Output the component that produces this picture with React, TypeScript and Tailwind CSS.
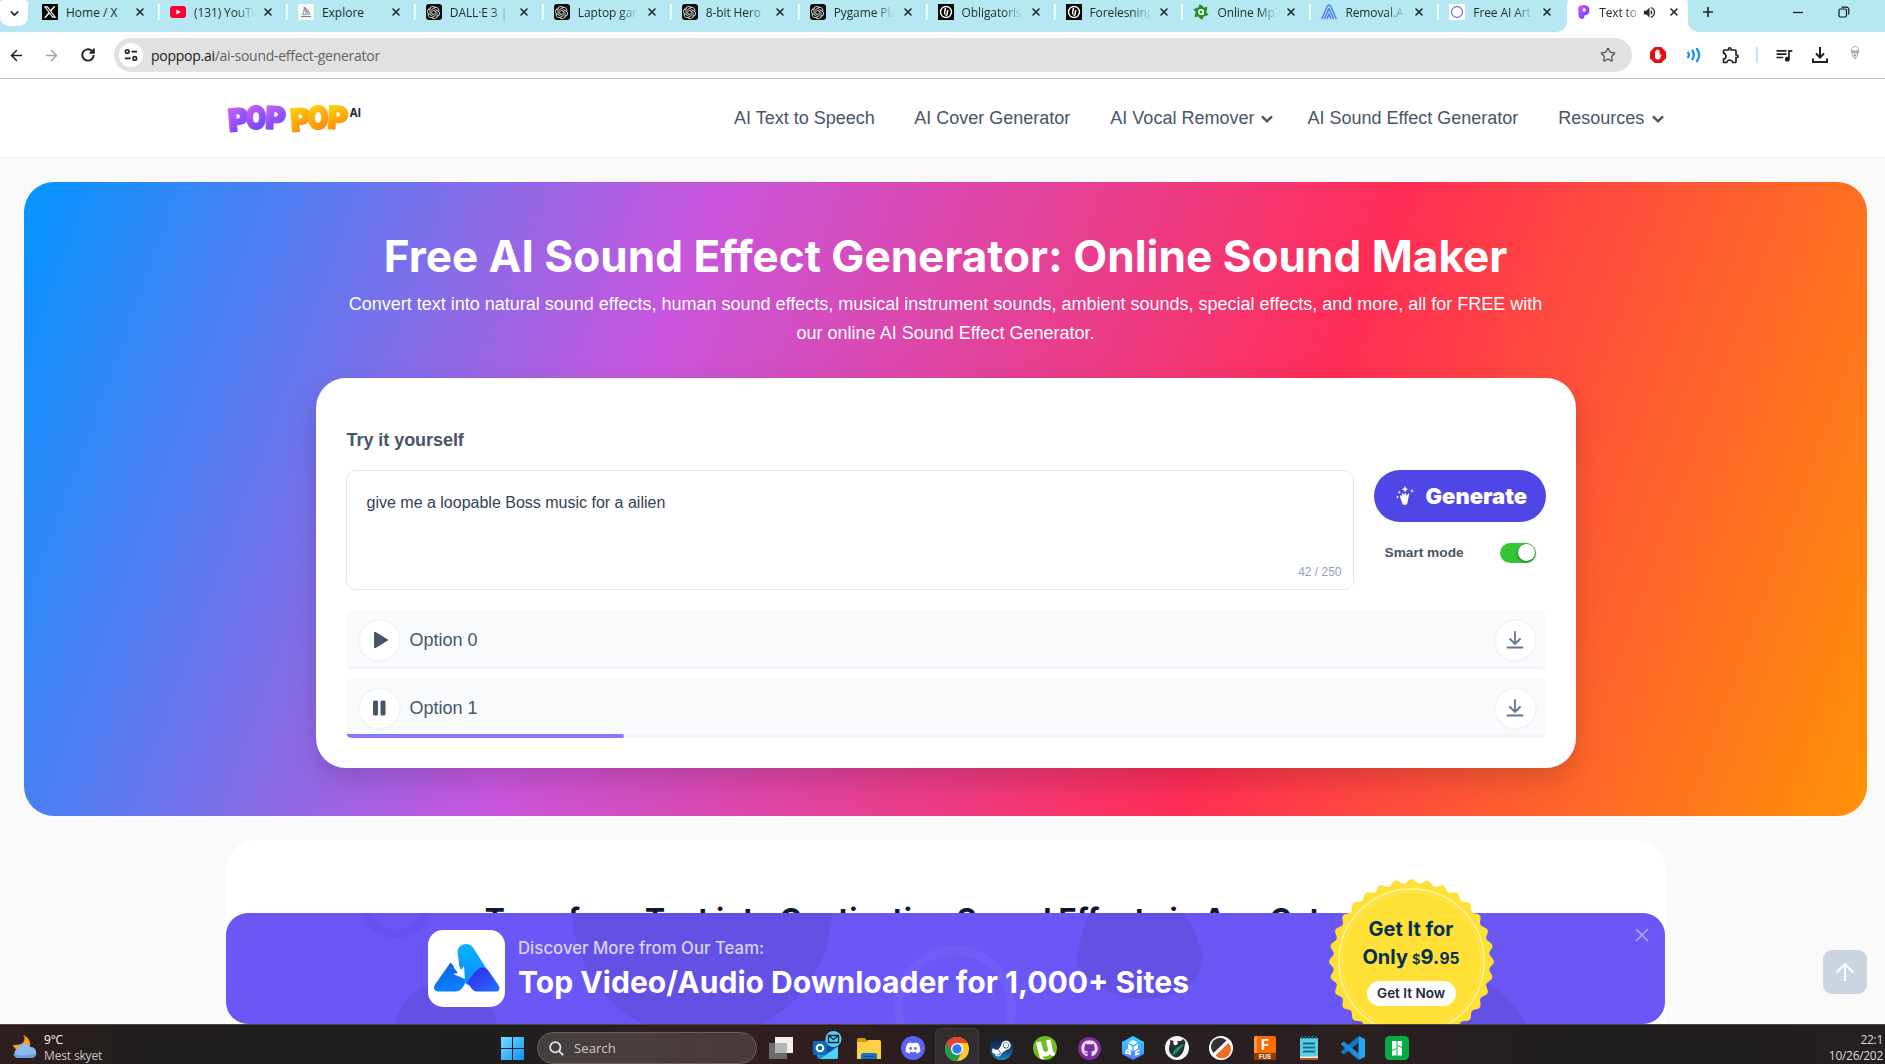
import React from 'react';
import { FaDiscord, FaGithub, FaSteamSymbol, FaXTwitter } from 'react-icons/fa6';
import { MdQueueMusic, MdOutlineExtension, MdVolumeUp } from 'react-icons/md';
import { SiOpenai } from 'react-icons/si';
import { ArrowLeft, ArrowRight, ChevronDown, Star, X } from 'lucide-react';

const chromeFont = "font-['Open_Sans','Noto_Sans',sans-serif]";

/* ---------- tab favicons ---------- */

const XFav = () => (
  <span className="flex size-4 items-center justify-center bg-black text-white"><FaXTwitter size={14} /></span>
);
const YouTubeFav = () => (
  <svg viewBox="0 0 16 16" className="size-4"><rect y="2" width="16" height="12" rx="3" fill="#ff0033" /><path d="M6.4 5.4 10.8 8l-4.4 2.6z" fill="#fff" /></svg>
);
const ExploreFav = () => (
  <svg viewBox="0 0 16 16" className="size-4">
    <rect width="16" height="16" fill="#f8f8fa" />
    <path d="M3 12.5h10M4 10.6C6 8.5 6.500 6 6 3.200c3 1.500 5 4.300 5.800 7.400M5 10.800l3.300-.2M8.200 10.600c0-2.500-.5-5-1.700-6.800M10 10.600C9.800 8 8.500 5.500 7 4" stroke="#7d8289" strokeWidth="1" fill="none" />
  </svg>
);
const GptFav = () => (
  <span className="flex size-4 items-center justify-center rounded-[3px] bg-[#0d0d0d] text-[#e8e8e8]"><SiOpenai size={13} /></span>
);
const SchoolFav = () => (
  <svg viewBox="0 0 16 16" className="size-4">
    <rect width="16" height="16" fill="#000" />
    <circle cx="8" cy="8" r="5.500" fill="none" stroke="#fff" strokeWidth="1.400" />
    <path d="M7.500 4 6.600 8.300c-.2 1.200.2 1.700 1 1.700M9.900 5.800 9 10.300c-.2.900-.8 1.200-1.400.900" stroke="#fff" strokeWidth="1.500" fill="none" />
  </svg>
);
const ConvertFav = () => (
  <svg viewBox="0 0 16 16" className="size-4">
    <g fill="#259021">
      {[0, 60, 120, 180, 240, 300].map((a) => (
        <path key={a} d="M5 5 6.600 0l3.600 2.600L10.500 6z" transform={`rotate(${a} 8 8)`} />
      ))}
      <circle cx="8" cy="8" r="5" />
    </g>
    <circle cx="8" cy="8" r="2.200" fill="none" stroke="#fff" strokeWidth="1.500" />
    <path d="M10 6v5" stroke="#fff" strokeWidth="1.300" />
  </svg>
);
const RemovalFav = () => (
  <svg viewBox="0 0 16 16" className="size-4">
    <path d="M1 14.500 6.300 2.300Q8 .2 9.700 2.300L15 14.500M3.600 14.500 8 4.500l4.400 10M6.200 14.500 8 10l1.800 4.500" fill="none" stroke="#4c7cf8" strokeWidth="1.500" strokeLinecap="round" strokeLinejoin="round" />
  </svg>
);
const RingFav = () => (
  <svg viewBox="0 0 16 16" className="size-4">
    <defs><linearGradient id="ring" x2="1" y2="1"><stop stopColor="#5b8be0" /><stop offset="1" stopColor="#a855c8" /></linearGradient></defs>
    <rect width="16" height="16" fill="#fff" />
    <circle cx="8" cy="8" r="5.500" fill="none" stroke="url(#ring)" strokeWidth="1.300" />
  </svg>
);
const PopFav = () => (
  <svg viewBox="0 0 16 16" className="size-4">
    <defs><linearGradient id="popfav" x2="1" y2="1"><stop stopColor="#d65cf5" /><stop offset="1" stopColor="#5a3bff" /></linearGradient></defs>
    <path d="M2.200 4C2.500 1.800 5 .8 8 1c3.800.2 5.600 2.200 5.500 5.200-.1 3.200-2 5-5 5.400-.3 1.800-.6 3.300-1.900 3.300C3.500 15 2.200 13 2.400 9.500Z" fill="url(#popfav)" />
    <circle cx="8.200" cy="6" r="1.700" fill="#fff" />
  </svg>
);

const tabs: { title: string; icon: () => React.JSX.Element; full?: boolean }[] = [
  { title: 'Home / X', icon: XFav, full: true },
  { title: '(131) YouTu', icon: YouTubeFav },
  { title: 'Explore', icon: ExploreFav, full: true },
  { title: 'DALL·E 3 | C', icon: GptFav },
  { title: 'Laptop gar', icon: GptFav },
  { title: '8-bit Hero', icon: GptFav },
  { title: 'Pygame Pla', icon: GptFav },
  { title: 'Obligatoris', icon: SchoolFav },
  { title: 'Forelesning', icon: SchoolFav },
  { title: 'Online Mp3', icon: ConvertFav },
  { title: 'Removal.A', icon: RemovalFav },
  { title: 'Free AI Art', icon: RingFav },
];

function TabStrip() {
  return (
    <div className={`flex h-8 shrink-0 bg-[#b6e8f3] text-[12px] text-[#1f2a2d] ${chromeFont}`}>
      <div className="mr-1 flex h-[26px] w-7 shrink-0 items-center justify-center rounded-b-[9px] rounded-t-[4px] bg-white">
        <ChevronDown size={13} strokeWidth={3.200} />
      </div>
      {tabs.map((t, i) => (
        <div key={t.title} className="flex h-6 w-[127.950px] shrink-0 items-center pl-[10px]">
          <t.icon />
          <span className={t.full ? 'ml-2 mt-px w-[61px] whitespace-nowrap' : 'ml-2 mt-px w-[61px] overflow-hidden whitespace-nowrap tracking-[-0.100px] [mask-image:linear-gradient(to_right,#000_68%,transparent_100%)]'}>
            {t.title}
          </span>
          <X size={12} strokeWidth={3.200} className="ml-[7px]" />
          <span className={i < 11 ? 'ml-auto h-4 w-[2px] bg-white' : 'hidden'} />
        </div>
      ))}
      <div className="relative -mt-[5px] h-[37px] w-[121px] shrink-0 rounded-t-[10px] bg-white">
        <svg viewBox="0 0 10 10" className="absolute -left-[10px] bottom-0 size-[10px]"><path d="M10 0v10H0A10 10 0 0 0 10 0" fill="#fff" /></svg>
        <svg viewBox="0 0 10 10" className="absolute -right-[10px] bottom-0 size-[10px]"><path d="M0 0v10h10A10 10 0 0 1 0 0" fill="#fff" /></svg>
        <div className="flex h-[34px] items-center pl-[9px]">
          <PopFav />
          <span className="ml-[7px] mt-px w-[38px] overflow-hidden whitespace-nowrap tracking-[-0.150px] [mask-image:linear-gradient(to_right,#000_70%,transparent_115%)]">Text to</span>
          <MdVolumeUp size={15} className="ml-[5px]" />
          <X size={12} strokeWidth={3.200} className="ml-[11px]" />
        </div>
      </div>
      <svg viewBox="0 0 12 12" className="ml-[14px] mt-[6px] size-3"><path d="M6 1v10M1 6h10" stroke="#1f2a2d" strokeWidth="1.700" /></svg>
      <svg viewBox="0 0 12 12" className="ml-[78px] mt-[6px] size-3"><path d="M1 6.500h10" stroke="#111" strokeWidth="1.200" /></svg>
      <svg viewBox="0 0 12 12" className="ml-[34px] mt-[6px] size-3" fill="none" stroke="#111" strokeWidth="1.200"><rect x="1" y="3" width="7.500" height="8" rx="1.500" /><path d="M3.500 1.200h5a2.300 2.300 0 0 1 2.300 2.300V8.500" /></svg>
    </div>
  );
}

function Toolbar() {
  return (
    <div className={`flex h-[47px] shrink-0 items-center border-b border-[#c6c8ca] bg-white text-[#1f1f1f] ${chromeFont}`}>
      <ArrowLeft size={17} strokeWidth={2.200} className="ml-[8px]" />
      <ArrowRight size={17} strokeWidth={2.200} className="ml-[18px] text-[#a3a3a3]" />
      <svg viewBox="0 0 16 16" className="ml-[20px] size-4" fill="none" stroke="currentColor" strokeWidth="1.900"><path d="M13.700 8A5.700 5.700 0 1 1 11.800 3.700L13.500 5.300M13.800 1.500v4.200H9.600" /></svg>
      <div className="ml-[18px] flex h-[34px] w-[1518px] items-center rounded-full bg-[#e1e1e1] pl-[5px]">
        <span className="flex size-6 items-center justify-center rounded-full bg-white">
          <svg viewBox="0 0 14 14" className="size-[14px]" fill="none" stroke="#1f1f1f" strokeWidth="1.600">
            <circle cx="3.200" cy="3.600" r="1.800" /><path d="M7.500 3.600H13M1 10.400h5.500" /><circle cx="10.800" cy="10.400" r="1.800" />
          </svg>
        </span>
        <span className="ml-[8px] whitespace-nowrap text-[14px] tracking-[-0.270px] text-[#5f6368]"><span className="text-[#1a1a1a]">poppop.ai</span>/ai-sound-effect-generator</span>
        <Star size={16} strokeWidth={2} className="ml-auto mr-[16px] text-[#5a5a5a]" />
      </div>
      <svg viewBox="0 0 16 16" className="ml-[18px] size-4">
        <path d="M4.700 0h6.600L16 4.700v6.600L11.300 16H4.700L0 11.300V4.700z" fill="#e60d12" />
        <path d="M5 8V4.600c0-.8 1-.8 1 0V3.500c0-.9 1.200-.9 1.200 0v-.4c0-.9 1.300-.9 1.300 0v.7c0-.8 1.200-.8 1.200 0V8.500l.9-1c.6-.5 1.300 0 .9.6L10 11.800c-.8 1.200-4 1.200-4.600-.3C5 10.500 5 9.500 5 8" fill="#fff" />
      </svg>
      <svg viewBox="0 0 16 16" className="ml-[20px] size-4" fill="none" stroke="#1790f0" strokeWidth="2.300" strokeLinecap="round">
        <path d="M2.200 5.800q1.400 2.200 0 4.400M6.500 3.800q2.600 4.200 0 8.400M11 2q4.200 6 0 12" />
      </svg>
      <MdOutlineExtension size={20} className="ml-[19px]" />
      <span className="ml-[15px] h-4 w-[2px] bg-[#b6e8f3]" />
      <MdQueueMusic size={20} className="ml-[16px]" />
      <svg viewBox="0 0 16 16" className="ml-[18px] size-4" fill="none" stroke="#1f1f1f" strokeWidth="2"><path d="M8 0v10M4 6.500l4 4 4-4M1 11.500V15h14v-3.500" /></svg>
      <svg viewBox="0 0 14 18" className="-mt-[4px] ml-[21px] h-[16px] w-[12px]" fill="none" stroke="#9b9b9b" strokeWidth=".9">
        <path d="M3 8C2 4 3.500 1.500 7 1.500S12 4 11 8c-.3 3-2 7-4 8-2-1-3.700-5-4-8Z" /><path d="M3.500 6.500h2.800v2H4zM7.700 6.500h2.800v2H8.200zM5.500 12h3M7 13v2M5 10.500l2-.6 2 .6" stroke="#777" />
      </svg>
    </div>
  );
}

/* ---------- site header ---------- */

function Logo() {
  return (
    <svg viewBox="0 0 136 34" className="mb-[3px] h-[34px] w-[136px]" fontFamily="Inter, sans-serif" fontWeight="900">
      <defs>
        <linearGradient id="lp" x1="0" y1="0" x2="0.400" y2="1"><stop offset=".1" stopColor="#d765f6" /><stop offset=".9" stopColor="#7546fd" /></linearGradient>
        <linearGradient id="ly" x1="0" y1="0" x2="0.300" y2="1"><stop offset=".15" stopColor="#ffd60f" /><stop offset=".9" stopColor="#fb8c0c" /></linearGradient>
      </defs>
      <g fontSize="31" strokeWidth="1.800" strokeLinejoin="round">
        <g fill="url(#lp)" stroke="url(#lp)">
          <text x="2" y="31" textLength="20" lengthAdjust="spacingAndGlyphs" transform="rotate(-5 12 18)">P</text>
          <text x="20" y="29" textLength="20" lengthAdjust="spacingAndGlyphs">O</text>
          <text x="39.500" y="29" textLength="20" lengthAdjust="spacingAndGlyphs" transform="rotate(3 49 18)">P</text>
        </g>
        <g fill="url(#ly)" stroke="url(#ly)">
          <text x="64.500" y="31" textLength="20" lengthAdjust="spacingAndGlyphs" transform="rotate(-5 74 18)">P</text>
          <text x="82" y="29" textLength="20.500" lengthAdjust="spacingAndGlyphs">O</text>
          <text x="102" y="29" textLength="20" lengthAdjust="spacingAndGlyphs" transform="rotate(4 112 18)">P</text>
        </g>
      </g>
      <text x="123.500" y="16.500" fontSize="12" fontWeight="700" fill="#1e293b" textLength="11.500" lengthAdjust="spacingAndGlyphs">AI</text>
    </svg>
  );
}

const NavChevron = () => (
  <svg viewBox="0 0 12 12" className="mt-px size-3" fill="none" stroke="currentColor" strokeWidth="2.400"><path d="m1 3.300 5 5 5-5" /></svg>
);

function SiteHeader() {
  return (
    <header className="flex h-[79px] items-center whitespace-nowrap border-b border-[#f3f3f3] bg-white pl-[226px] text-[18px] text-[#475569]">
      <Logo />
      <nav className="ml-[372px] flex items-center pt-px">
        <a className="mr-[39.500px]">AI Text to Speech</a>
        <a className="mr-[40px]">AI Cover Generator</a>
        <a className="mr-[34px] flex items-center gap-[7px]">AI Vocal Remover<NavChevron /></a>
        <a className="mr-[40px]">AI Sound Effect Generator</a>
        <a className="flex items-center gap-[8px]">Resources<NavChevron /></a>
      </nav>
    </header>
  );
}

/* ---------- generator ---------- */

function RoundButton({ children }: { children: React.ReactNode }) {
  return <button className="flex size-[43px] items-center justify-center rounded-full border-2 border-[#f1f4f9] bg-white">{children}</button>;
}

function OptionRow({ label, progress, playing }: { label: string; progress: number; playing: boolean }) {
  return (
    <div className="flex h-[60px] flex-col overflow-hidden rounded-[6px] bg-[#f8fafc]">
      <div className="flex flex-1 items-center pl-[12px] pr-[9px] pt-[4px]">
        <RoundButton>
          {playing ? (
            <svg viewBox="0 0 14 16" className="h-4 w-[14px]" fill="#475569"><rect x="1" y=".5" width="5" height="15" rx="1.500" /><rect x="8.500" y=".5" width="5" height="15" rx="1.500" /></svg>
          ) : (
            <svg viewBox="0 0 16 18" className="ml-[3px] h-[18px] w-4" fill="#475569" stroke="#475569" strokeWidth="2" strokeLinejoin="round"><path d="M2 1.800v14.400L14 9z" /></svg>
          )}
        </RoundButton>
        <span className="ml-[9px] flex-1 text-[18px] text-[#475569]">{label}</span>
        <RoundButton>
          <svg viewBox="0 0 18 18" className="size-[18px]" fill="none" stroke="#64748b" strokeWidth="1.800" strokeLinecap="round"><path d="M9 1v11.500M4 8l5 5 5-5" /><path d="M1.500 16.500h15" /></svg>
        </RoundButton>
      </div>
      <div className="h-1 bg-[#f1f4f9]"><div className="h-1 rounded-r-[2px] bg-[#837bff]" style={{ width: progress }} /></div>
    </div>
  );
}

function Generator() {
  return (
    <section className="ml-6 mr-[18px] mt-[24px] flex h-[634px] flex-col items-center rounded-[30px] bg-[linear-gradient(110deg,#0596ff_0%,#c856dd_33.300%,#ff2d55_66.700%,#ff9207_100%)]">
      <h1 className="mt-[46px] whitespace-nowrap font-['Inter',sans-serif] text-[44.100px] font-bold leading-[56px] text-white">Free AI Sound Effect Generator: Online Sound Maker</h1>
      <p className="mt-[6px] w-[1200px] text-center text-[18px] leading-[29px] text-white">
        Convert text into natural sound effects, human sound effects, musical instrument sounds, ambient sounds, special effects, and more, all for FREE with our online AI Sound Effect Generator.
      </p>
      <div className="mt-[30px] h-[390px] w-[1260px] rounded-[30px] bg-white px-[30px] pt-[48px] shadow-[0_12px_28px_rgba(0,0,0,0.150)]">
        <h2 className="ml-px text-[18px] font-bold leading-[28px] tracking-[-0.050px] text-[#475569]">Try it yourself</h2>
        <div className="mt-[16px] flex justify-between">
          <div className="flex h-[120px] w-[1008px] flex-col justify-between rounded-[10px] border border-[#e2e8f0] pb-[7px] pl-[20px] pr-[19px] pt-[20px]">
            <p className="text-[16px] leading-6 text-[#334155]">give me a loopable Boss music for a ailien</p>
            <p className="-mr-[8px] text-right text-[12px] leading-5 text-[#94a3b8]">42 / 250</p>
          </div>
          <div className="w-[172px]">
            <button className="flex h-[52px] w-full items-center rounded-full bg-[#5046e5] pl-[22px] font-['Inter',sans-serif] text-[22px] font-black text-white">
              <svg viewBox="0 0 18 20" className="h-5 w-[18px]" fill="#fff">
                <path d="m9 0 1 2.200L12.200 3.200 10 4.200 9 6.400 8 4.200 5.800 3.200 8 2.200zM16 3l.6 1.500 1.400.5-1.400.6L16 7l-.6-1.400L14 5l1.400-.5zM1.500 9.500l.5 1 1 .5-1 .5-.5 1-.5-1-1-.5 1-.5zM3.200 4.800l.5 1 1 .4-1 .5-.5 1-.5-1-1-.5 1-.4z" />
                <path d="M4.300 9.500c.7-.7 1.500 0 2.200 1L5.800 8c.2-1 1.300-1 1.800 0l.7 1.600.3-1.800c.4-1 1.600-.8 1.700.2l.2 1.900 1.300-2c.7-.7 1.700-.1 1.400.8l-1.300 5.200c-.4 2-.4 3-.8 4.100-1.500 1.500-4 1-4.500 0-.3-1.400-3-6.500-2.300-8.500" />
              </svg>
              <span className="ml-[12px]">Generate</span>
            </button>
            <div className="mt-[20px] flex items-center justify-between pl-[11px] pr-[10px] text-[13.700px] font-bold text-[#475569]">
              <span className="pt-px">Smart mode</span>
              <span className="flex h-5 w-9 items-center justify-end rounded-full bg-[#34c634] pr-[1px]"><span className="size-[17px] rounded-full bg-white shadow-[0_1px_3px_rgba(0,0,0,0.500)]" /></span>
            </div>
          </div>
        </div>
        <div className="mt-5 flex flex-col gap-2">
          <OptionRow label="Option 0" progress={0} playing={false} />
          <OptionRow label="Option 1" progress={278} playing />
        </div>
      </div>
    </section>
  );
}

/* ---------- promo banner ---------- */

const sealPath = Array.from({ length: 257 }, (_, i) => {
  const a = (i / 256) * Math.PI * 2;
  const r = 80.300 + 2.200 * Math.cos(a * 32);
  return `${i ? 'L' : 'M'}${(82.500 + r * Math.sin(a)).toFixed(2)} ${(82.500 - r * Math.cos(a)).toFixed(2)}`;
}).join('') + 'Z';

function Banner() {
  return (
    <aside className="absolute bottom-0 left-[226px] h-[111px] w-[1439px] font-['Inter',sans-serif]">
      <div className="relative flex h-full items-center overflow-hidden rounded-[22px] bg-[#6a57f6] pl-[202px]">
        <svg viewBox="0 0 1439 111" className="absolute inset-0 h-full w-full">
          <g fill="#6351e6">
            <circle cx="476" cy="-4" r="130" /><circle cx="220" cy="121" r="52" />
            <path d="M864 0h94q12 18 17 36c6 28-14 50-61 50-38-3-63-26-63-40 0-14 7-28 13-46Z" /><circle cx="1212" cy="155" r="98" />
          </g>
          <circle cx="170" cy="-10" r="31" fill="none" stroke="#6653ed" strokeWidth="9" />
          <circle cx="729" cy="94" r="56.500" fill="none" stroke="#705ef6" strokeWidth="9" />
        </svg>
        <div className="relative flex size-[77px] items-center justify-center rounded-[15px] bg-white">
          <svg viewBox="0 0 66 48" className="mb-[1px] h-[48px] w-[66px]">
            <defs>
              <linearGradient id="b1" x1=".5" x2=".3" y2="1"><stop stopColor="#07b4ff" /><stop offset="1" stopColor="#0a8cff" /></linearGradient>
              <linearGradient id="b2" x1=".3" x2=".5" y2="1"><stop stopColor="#1261e0" /><stop offset="1" stopColor="#0b82ff" /></linearGradient>
              <linearGradient id="b3" x2="1" y2="1"><stop stopColor="#3a1ff0" /><stop offset="1" stopColor="#2172ff" /></linearGradient>
            </defs>
            <path d="M16.500 18.500 33 36 29 43q-3 4.500-8 4.500H4q-6-1-3-7Z" fill="url(#b2)" />
            <path d="M24 11 C22 4 27 0 32 0q5 0 8 5l14 22-21 14-7-10Z" fill="url(#b1)" />
            <path d="M33 39 40 29q8-9 14-3l11 16q2 5.500-4 5.500H43q-4 0-6-4Z" fill="url(#b3)" />
            <path d="M24 13q0 8 3 13l3-4 1 13-12-5 5-1q-4-4-5-8 3 3 5 4-2-6 0-12" fill="#fff" />
          </svg>
        </div>
        <div className="relative ml-[13px] whitespace-nowrap">
          <div className="text-[16.800px] font-medium leading-[24px] text-[#d9d4fd]">Discover More from Our Team:</div>
          <div className="mt-[3px] text-[30.100px] font-bold leading-[38px] text-white">Top Video/Audio Downloader for 1,000+ Sites</div>
        </div>
        <svg viewBox="0 0 14 14" className="absolute right-[16px] top-[15px] size-[14px]"><path d="m1 1 12 12M13 1 1 13" stroke="#b4a9fb" strokeWidth="1.500" /></svg>
      </div>
      <div className="absolute bottom-0 left-[1102.500px] h-[145px] w-[165px] overflow-hidden text-center text-[#07304f]">
        <svg viewBox="0 0 165 165" className="absolute left-0 top-0 size-[165px]">
          <path d={sealPath} fill="#fee037" />
          <circle cx="82.500" cy="82.500" r="72.500" fill="none" stroke="#fff08a" strokeWidth="1.800" />
          <circle cx="82.500" cy="82.500" r="69.500" fill="none" stroke="#ffec75" strokeWidth=".8" />
        </svg>
        <div className="relative pt-[36px]">
          <div className="text-[20px] font-bold leading-[28px]">Get It for</div>
          <div className="flex items-baseline justify-center text-[20px] font-bold leading-[28px]"><span className="mr-[4px]">Only</span><span className="text-[13px] font-semibold">$</span>9.<span className="text-[15.500px]">95</span></div>
          <div className="mx-auto mt-[8px] h-[25px] w-[89px] rounded-full bg-white text-[13.500px] font-semibold leading-[25px] text-[#22263c]">Get It Now</div>
        </div>
      </div>
    </aside>
  );
}

/* ---------- Windows taskbar ---------- */

const Slot = ({ children, active }: { children: React.ReactNode; active?: boolean }) => (
  <div className={active ? 'flex h-9 w-[44px] items-center justify-center rounded-t-[5px] border border-b-0 border-[#40393a] bg-[#332d2e] pt-[4px]' : 'flex h-9 w-[44px] items-center justify-center pt-[4px]'}>{children}</div>
);

function Taskbar() {
  return (
    <footer className={`flex h-10 shrink-0 items-end overflow-hidden whitespace-nowrap border-t border-[#4b4440] bg-[linear-gradient(90deg,#2e1f1e_0%,#211f1f_8%,#1f1e1e_26%,#32201f_36%,#2f1e1e_46%,#231f20_51%,#2c2021_72%,#201f20_84%,#241f22_100%)] text-[12px] text-[#e3e0e0] ${chromeFont}`}>
      <svg viewBox="0 0 26 26" className="mb-[4px] ml-[12px] size-[26px]">
        <path d="M11 1c4 5 0 11-10 10 2 7 13 9 17 2 1-6-2-10-7-12Z" fill="#f6a01a" />
        <path d="M6 24a5 5 0 0 1 0-9.500 7 7 0 0 1 12.500-1.500A5.600 5.600 0 0 1 20 24Z" fill="#8fb8f3" /><path d="M6 24a5 5 0 0 1-4.500-4q10 3 23-1a5.600 5.600 0 0 1-4.500 5Z" fill="#6d9be6" />
      </svg>
      <div className="ml-[6px] flex h-10 w-[457px] flex-col pt-[8px] leading-[16px]">
        <span className="tracking-[-0.200px] text-white">9°C</span>
        <span className="tracking-[-0.150px] text-[#c9c4c4]">Mest skyet</span>
      </div>
      <svg viewBox="0 0 23 23" className="mb-[4px] size-[23px]">
        <defs><linearGradient id="win" x2="1" y2="1"><stop stopColor="#7ddcff" /><stop offset="1" stopColor="#0a93f8" /></linearGradient></defs>
        <path d="M0 0h11v11H0zM12 0h11v11H12zM0 12h11v11H0zM12 12h11v11H12z" fill="url(#win)" />
      </svg>
      <div className="ml-[13px] flex h-[32px] w-[220px] items-center rounded-full border border-[#6a5f5d] bg-[linear-gradient(90deg,#444040,#4b3b3a)] pl-[11px] text-[13.200px] text-[#cfcaca]">
        <svg viewBox="0 0 16 16" className="mr-[10px] size-[15px]" fill="none" stroke="#e6e3e3" strokeWidth="1.900"><circle cx="6.700" cy="6.700" r="5.500" /><path d="m10.800 10.800 4.400 4.400" /></svg>
        <span className="pt-px">Search</span>
      </div>
      <div className="ml-[2px] flex items-end">
        <Slot>
          <svg viewBox="0 0 24 24" className="size-6"><rect x="6" y="1" width="18" height="16" fill="#efefef" /><rect x="0" y="7" width="18" height="16" fill="#6c6c6c" /><rect x="6" y="7" width="12" height="10" fill="#b4b4b4" /></svg>
        </Slot>
        <Slot>
          <svg viewBox="0 0 30 30" className="-mt-[4px] ml-[3px] size-[30px] shrink-0">
            <path d="M4 15 15 8l11 7v11q0 2-2 2H9q-4 0-4-3Z" fill="#1d8de0" /><path d="M26 15v11q0 2-2 2H8l12-8Z" fill="#4fd2f7" /><path d="M15 12 27 15 15 22Z" fill="#0f4f9c" />
            <rect x="1" y="10" width="14" height="14" rx="1.500" fill="#0f6cbd" /><circle cx="8" cy="17" r="3.300" fill="none" stroke="#fff" strokeWidth="2" />
            <circle cx="21.500" cy="8" r="8" fill="#5ccbf8" /><path d="M16.500 4.500h10v7h-10zl5 4 5-4" fill="none" stroke="#10242c" strokeWidth="1.300" />
          </svg>
        </Slot>
        <Slot>
          <svg viewBox="0 0 24 24" className="size-6"><path d="M0 4q0-2 2-2h6l2 3v4H0Z" fill="#d99a09" /><path d="M0 6h9l2-2h11q2 0 2 2v17H0Z" fill="#ffcf48" /><path d="M4 23v-4q0-2 2-2h12q2 0 2 2v4Z" fill="#1277c9" /><path d="M7 20.500h10" stroke="#0b4f8e" strokeWidth="1.200" /></svg>
        </Slot>
        <Slot><span className="flex size-6 items-center justify-center rounded-full bg-[#5865f2] text-white"><FaDiscord size={16} /></span></Slot>
        <Slot active>
          <svg viewBox="0 0 24 24" className="size-6">
            <circle cx="12" cy="12" r="12" fill="#fcc934" />
            <path d="M12 12 1.600 6A12 12 0 0 0 12 24l5.200-9Z" fill="#1e9b4c" />
            <path d="M12 12 6.800 15 1.600 6A12 12 0 0 1 22.400 6H12Z" fill="#ea4335" />
            <circle cx="12" cy="12" r="6" fill="#fff" /><circle cx="12" cy="12" r="4.700" fill="#2d7bf0" />
          </svg>
        </Slot>
        <Slot><span className="flex size-[23px] items-center justify-center overflow-hidden rounded-full bg-[linear-gradient(#141f3c,#14497e_60%,#1a8abf)] text-white"><FaSteamSymbol size={21} /></span></Slot>
        <Slot>
          <svg viewBox="0 0 24 24" className="size-6"><circle cx="12" cy="12" r="12" fill="#6cc024" /><path d="M3 6.500 8 5.500l2 8c1 3.500 5 3 5-.5L13 4.500l4.500-1L20 15q.5 2.200 2.500 2l-1.500 3q-3 .5-4-2c-2 3-5.500 3-7 1.500l1 4-4-1Z" fill="#fff" /></svg>
        </Slot>
        <Slot><span className="flex size-[23px] items-center justify-center rounded-full bg-[#7a2ea0] text-white"><FaGithub size={17} className="text-[#eedcf7]" /></span></Slot>
        <Slot>
          <svg viewBox="0 0 24 24" className="size-6">
            <defs><linearGradient id="hex" x2="0" y2="1"><stop stopColor="#3cd3ff" /><stop offset="1" stopColor="#4a7fff" /></linearGradient></defs>
            <path d="m12 0 11 6v12l-11 6L1 18V6Z" fill="url(#hex)" /><path d="m12 4 4.500 2.500L12 9 7.500 6.500ZM7 8l4.300 2.500v4.500L7 12.500ZM17 8l-4.300 2.500v4.500L17 12.500Z" fill="#fff" />
            <path d="M5 18v-3l2-1 2 1.500V19M5 16.800l4 .8M18.500 14.200 15 15.500v3l3.500-1.300" fill="none" stroke="#fff" strokeWidth="1.600" />
          </svg>
        </Slot>
        <Slot>
          <svg viewBox="0 0 24 24" className="size-6"><circle cx="12" cy="12" r="12" fill="#f4f4f4" /><path d="M5 3.500 8 5h8l2-2 2.500 2.500L19 13c-1 4-4 7.500-7 8.500C7 21 4 17 4 13c0-4 2-5 1-9.500Z" fill="#2b2e30" /><path d="M8 6q4-3 5 1-1 3-4 2Z" fill="#fff" /><path d="M19 8C13 10 8 14 7 20q6-4 9-8Z" fill="#0c9a87" /></svg>
        </Slot>
        <Slot>
          <svg viewBox="0 0 24 24" className="size-6"><circle cx="12" cy="12" r="12" fill="#fff" /><path d="M17.500 4.500A9 9 0 0 0 4.500 17Z" fill="#303236" /><path d="M19.500 7A9 9 0 0 1 6.500 19.500Z" fill="#ee6c23" /></svg>
        </Slot>
        <Slot>
          <span className="relative flex h-6 w-[22px] flex-col items-center overflow-hidden rounded-[2px] bg-[#ff6b00] font-['Inter',sans-serif] text-white">
            <span className="h-[17px] text-[14px] font-bold leading-[17px]">F</span>
            <span className="h-[7px] w-full bg-[#8f3c00] text-center text-[6px] font-bold leading-[7px]">FUS</span>
            <span className="absolute left-0 top-0 h-[17px] w-[3px] bg-[#ff9a4d]" />
          </span>
        </Slot>
        <Slot>
          <svg viewBox="0 0 20 24" className="h-6 w-5"><path d="M1 2h18v19H1Z" fill="#5ecbe0" /><path d="M1 20.500h18V22H1z" fill="#eee" /><path d="M1 22h18v2H1z" fill="#b4560f" /><path d="M3 0v3M6.500 0v3M10 0v3M13.500 0v3M17 0v3" stroke="#0f7c96" strokeWidth="1.500" /><path d="M4 7.500h12M4 11.500h12M4 15.500h12" stroke="#0c6f92" strokeWidth="1.800" /></svg>
        </Slot>
        <Slot>
          <svg viewBox="0 0 24 24" className="size-6"><path d="M17.500 0 24 3v18l-6.500 3Z" fill="#27a4f2" /><path d="M18 6.500 3 18.500 0 16.500v-1L17.500 0Z" fill="#1079c4" /><path d="M18 17.500 3 5.500 0 7.500v1L17.500 24Z" fill="#1c8edb" /></svg>
        </Slot>
        <Slot>
          <svg viewBox="0 0 24 24" className="size-6"><rect width="24" height="24" rx="4.500" fill="#06ad46" /><path d="M7 5h4.500v14.500H7zM12.500 5H17v14.500h-4.500z" fill="#fff" /><path d="m7 14.500 4.500-2M12.500 9.500l4.500 2" stroke="#06ad46" strokeWidth="1" /></svg>
        </Slot>
      </div>
      <div className="ml-auto flex h-10 flex-col items-end pr-[2px] pt-[8px] leading-[16px] tracking-[-0.300px] text-[#dcd8d8]">
        <span>22:1</span>
        <span>10/26/202</span>
      </div>
    </footer>
  );
}

export default function App() {
  return (
    <div className="flex h-[1064px] w-[1885px] flex-col overflow-hidden bg-white font-['Liberation_Sans',Arial,sans-serif]">
      <TabStrip />
      <Toolbar />
      <main className="relative flex-1 overflow-hidden bg-[#f9f9f9]">
        <SiteHeader />
        <Generator />
        <section className="ml-[226px] mt-6 h-[300px] w-[1440px] rounded-t-[30px] bg-white pt-[60px] text-center">
          <h2 className="-ml-px whitespace-nowrap font-['Inter',sans-serif] text-[30.130px] font-bold leading-[38px] text-[#0f172a]">Transform Text into Captivating Sound Effects in Any Category</h2>
        </section>
        <Banner />
        <button className="absolute bottom-[30px] right-[18px] flex size-11 items-center justify-center rounded-[9px] bg-[#cbd5e1]">
          <svg viewBox="0 0 18 18" className="size-[18px]" fill="none" stroke="#fff" strokeWidth="1.900"><path d="M9 18V1M.7 9.500 9 1l8.300 8.500" /></svg>
        </button>
      </main>
      <Taskbar />
    </div>
  );
}
